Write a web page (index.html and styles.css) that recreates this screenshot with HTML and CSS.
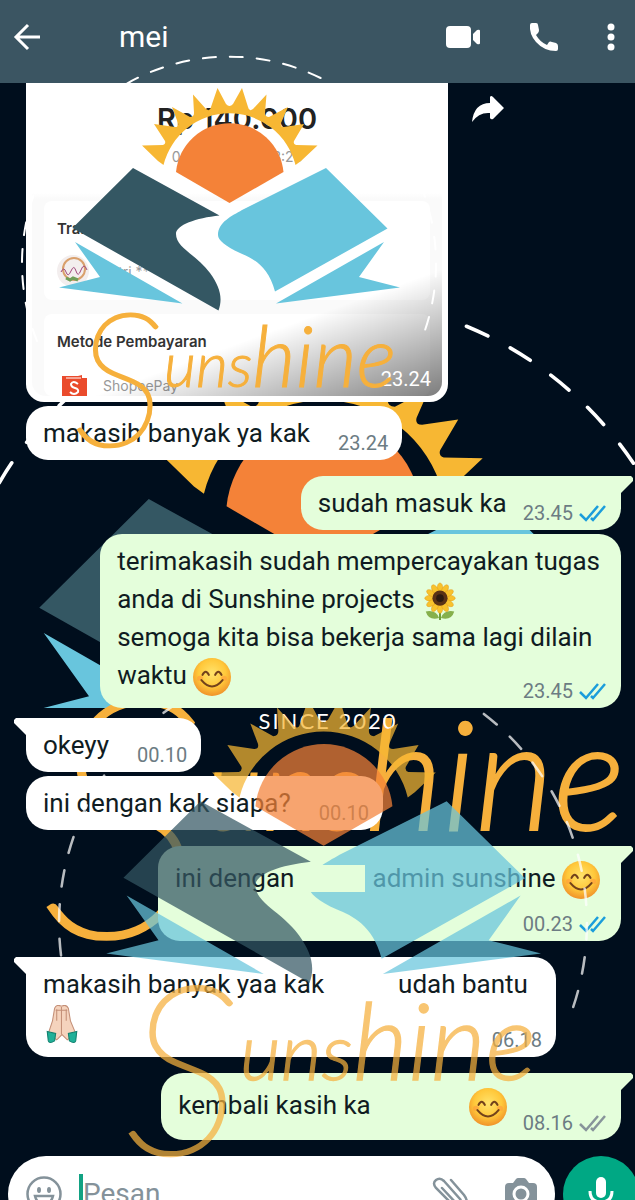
FILE: index.html
```
<!DOCTYPE html>
<html lang="id">
<head>
  <meta charset="UTF-8">
  <title>mei</title>
  <meta name="viewport" content="width=device-width,initial-scale=1">
  <link rel="stylesheet" href="styles.css">
</head>
<body>
  <svg class="defs" aria-hidden="true">
    <defs>
      <radialGradient id="face" cx="50%" cy="40%" r="60%">
        <stop offset="0" stop-color="#ffe36b"/><stop offset=".6" stop-color="#ffc83a"/><stop offset="1" stop-color="#f0922a"/>
      </radialGradient>
      <clipPath id="upper"><rect width="635" height="708"/></clipPath>
      <clipPath id="lower"><rect y="708" width="635" height="492"/></clipPath>
      <g id="mark">
        <path class="ring" d="M37 341A207 207 0 1 1 421 341"/>
        <path fill="#f7b733" d="M142 145.500L163 145Q166 144 165 141L154 124L175 127Q179 127 178 123L172 107L190 117Q194 117 194 113L193 94.500L206 109Q210 112 211 107L217.500 88L226 104Q229.500 108 233 104L242 88L248 107Q249 112 253 109L266.500 94.500L265 113Q265 117 269 117L288 107L281 123Q280 127 284 127L304 124L294 141Q293 144 296 145L317.500 145.500L301 161L295.500 165A68 68 0 0 0 163.500 165L158 161Z"/>
        <path fill="#f48238" d="M176 172A54 54 0 0 1 283.500 172L229.500 203Z"/>
        <path fill="#345763" d="M133 168L219.500 215.500C196 218 176 225 176 234C176 248 197 255 210 273C220 287 223 298 218.500 310.500L72.500 228Z"/>
        <path fill="#68c5dd" d="M326 168L387.500 228.500L275 291.500C268 265 252 258 240 253C225 246 218 240 218 235C218 222 232 216 242 210ZM75 242L182.500 303.500L59 287.500L100 277ZM384 242L359 277L400 287.500L276 303.500Z"/>
      </g>
      <g id="script">
        <text class="script-cap" x="74" y="445">S</text>
        <text class="script" x="164" y="387">uns<tspan class="script-tail">hine</tspan></text>
      </g>
      <symbol id="smile" viewBox="0 0 36 36">
        <circle cx="18" cy="18" r="18" fill="url(#face)"/>
        <path d="M4 18q3-3 6 1q-3 4-6 2zM32 18q-3-3-6 1q3 4 6 2z" fill="#ff9a3c" opacity=".6"/>
        <path d="M9 16q3-6 6 0M21 16q3-6 6 0M8 21q10 12 20 0" fill="none" stroke="#73421b" stroke-width="2" stroke-linecap="round"/>
      </symbol>
      <symbol id="sunflower" viewBox="0 0 36 40">
        <path d="M18 24v16" stroke="#6b9a35" stroke-width="2"/>
        <path d="M17 38Q14 29 3 31Q6 41 17 38ZM19 38Q22 29 33 31Q30 41 19 38Z" fill="#86b04c"/>
        <g fill="#f8c22c" stroke="#e39a18" stroke-width=".5">
          <g id="petals"><ellipse cx="18" cy="7" rx="3" ry="6"/><ellipse cx="18" cy="27" rx="3" ry="6"/><ellipse cx="8" cy="17" rx="6" ry="3"/><ellipse cx="28" cy="17" rx="6" ry="3"/></g>
          <use href="#petals" transform="rotate(30 18 17)"/>
          <use href="#petals" transform="rotate(60 18 17)"/>
        </g>
        <circle cx="18" cy="17" r="8" fill="#5a3216"/><circle cx="18" cy="17" r="4" fill="#2c1a10"/>
      </symbol>
      <symbol id="pray" viewBox="0 0 36 36">
        <path d="M17 1Q13-1 11 3L9 15L5 27L13 33L18 28L23 33L31 27L26 15L24 3Q22-1 18 1Z" fill="#f5d3bd" stroke="#c49078" stroke-width="1"/>
        <path d="M17.500 2V28M13 4V15M22 4V15M12 5h5M18 5h5" fill="none" stroke="#c49078" stroke-width="1"/>
        <path d="M4 25L12 27L11 34Q6 37 5 34ZM32 25L24 27L25 34Q30 37 31 34Z" fill="#20b098" stroke="#12806e" stroke-width="1"/>
      </symbol>
      <symbol id="ticks" viewBox="0 0 28 18">
        <path d="M1 10L7 16L19 2M12 14L14 16L26 2" fill="none" stroke="currentColor" stroke-width="2.500"/>
      </symbol>
    </defs>
  </svg>

  <div class="app">
    <svg class="wallpaper" viewBox="0 0 635 1200" preserveAspectRatio="xMidYMin slice" aria-hidden="true">
      <g clip-path="url(#upper)"><use href="#mark" transform="translate(-92 195) scale(1.81)"/></g>
      <use href="#script" transform="translate(-92 130) scale(1.81)"/>
      <text class="since" x="328" y="729">SINCE 2020</text>
    </svg>

    <header class="topbar">
      <button class="icon-btn" aria-label="Kembali">
        <svg width="28" height="28" viewBox="0 0 28 28"><path d="M15 2L3 14L15 26M3 14H27" fill="none" stroke="#fff" stroke-width="3"/></svg>
      </button>
      <h1>mei</h1>
      <button class="icon-btn" aria-label="Panggilan video">
        <svg width="36" height="24" viewBox="0 0 36 24" fill="#fff"><rect x="1" y="1" width="25" height="22" rx="4"/><path d="M28 9L32 5Q35 4 35 6V18Q35 20 32 19L28 15Z"/></svg>
      </button>
      <button class="icon-btn" aria-label="Panggilan suara">
        <svg width="30" height="30" viewBox="0 0 30 30" fill="#fff"><path d="M1 3Q1 1 3 1H7Q9 1 9 3L10 8Q10 10 9 11L7 13Q11 20 18 23L20 20Q21 19 23 20L27 21Q29 22 29 24V27Q29 29 27 29Q15 29 7 20Q0 12 1 3Z"/></svg>
      </button>
      <button class="icon-btn" aria-label="Menu">
        <svg width="8" height="28" viewBox="0 0 8 28" fill="#fff"><circle cx="4" cy="4" r="3.500"/><circle cx="4" cy="14" r="3.500"/><circle cx="4" cy="24" r="3.500"/></svg>
      </button>
    </header>

    <main class="chat">
      <div class="row">
        <div class="photo">
          <div class="receipt">
            <p class="amount">Rp 140.000</p>
            <p class="date">08 Jun 2023, 23:23</p>
            <section class="card card--to">
              <h2>Transfer ke</h2>
              <div class="line">
                <svg width="32" height="32" viewBox="0 0 32 32"><circle cx="16" cy="16" r="16" fill="#f3eeee"/><circle cx="17" cy="14" r="11" fill="none" stroke="#d9a06c" stroke-width="2"/><path d="M4 17q3-6 5 0t5-1t5 0t5-1t6 0" fill="none" stroke="#a0487c" stroke-width="1"/><path d="M9 23l4 2l3-2l5 2" fill="none" stroke="#6f9f58" stroke-width="3"/></svg>
                <span>Putri ****</span>
              </div>
            </section>
            <section class="card card--pay">
              <h2>Metode Pembayaran</h2>
              <div class="line">
                <svg width="34" height="22" viewBox="0 0 34 22"><path d="M5 2H21L25 1V4H30V22H5Z" fill="#ea4b2c"/><path d="M9 4H24" stroke="#fff"/><path d="M21 10q-5-4-7 0q0 3 4 4t3 4q-4 4-8 0" fill="none" stroke="#fff" stroke-width="2"/></svg>
                <span>ShopeePay</span>
              </div>
            </section>
            <time>23.24</time>
          </div>
        </div>
        <button class="icon-btn" aria-label="Teruskan">
          <svg width="34" height="28" viewBox="0 0 34 28"><path d="M1 27Q3 8 19 8V2Q20 0 22 2L33 13L22 24Q20 25 19 23V18Q8 17 1 27Z" fill="#fff"/></svg>
        </button>
      </div>

      <div class="bubble bubble--next"><p>makasih banyak ya kak</p><time>23.24</time></div>

      <div class="bubble bubble--out tail"><p>sudah masuk ka</p><time>23.45 <svg class="ticks read"><use href="#ticks"/></svg></time></div>
      <div class="bubble bubble--out bubble--next bubble--block">
        <p>terimakasih sudah mempercayakan tugas<br>anda di Sunshine projects <svg class="emoji"><use href="#sunflower"/></svg><br>semoga kita bisa bekerja sama lagi dilain<br>waktu <svg class="emoji"><use href="#smile"/></svg></p>
        <time>23.45 <svg class="ticks read"><use href="#ticks"/></svg></time>
      </div>

      <div class="bubble tail bubble--close"><p>okeyy</p><time>00.10</time></div>
      <div class="bubble bubble--next"><p>ini dengan kak siapa?</p><time>00.10</time></div>

      <div class="bubble bubble--out tail bubble--block bubble--tall bubble--below">
        <p>ini dengan<span class="patch"></span>admin sunshine <svg class="emoji"><use href="#smile"/></svg></p>
        <time>00.23 <svg class="ticks read"><use href="#ticks"/></svg></time>
      </div>

      <div class="bubble tail bubble--block bubble--thanks">
        <p>makasih banyak yaa kak<span class="blank"></span>udah bantu<br><svg class="emoji"><use href="#pray"/></svg></p>
        <time>06.18</time>
      </div>

      <div class="bubble bubble--out tail bubble--tall">
        <p>kembali kasih ka<span class="blank blank--wide"></span><svg class="emoji"><use href="#smile"/></svg></p>
        <time>08.16 <svg class="ticks"><use href="#ticks"/></svg></time>
      </div>
    </main>

    <form class="composer">
      <div class="field">
        <button type="button" class="icon-btn" aria-label="Emoji">
          <svg width="36" height="36" viewBox="0 0 36 36" fill="none" stroke="#84929a" stroke-width="2.500"><circle cx="18" cy="18" r="16.500"/><ellipse cx="13" cy="14" rx="2" ry="3" fill="#84929a" stroke="none"/><ellipse cx="23" cy="14" rx="2" ry="3" fill="#84929a" stroke="none"/><path d="M9 20H27Q25 28 18 28T9 20Z"/></svg>
        </button>
        <input type="text" placeholder="Pesan" aria-label="Pesan">
        <button type="button" class="icon-btn" aria-label="Lampirkan">
          <svg width="36" height="36" viewBox="0 0 36 36" fill="none" stroke="#84929a" stroke-width="2.500" stroke-linecap="round"><path d="M19 4L32 19Q38 27 31 31Q26 34 21 29L4 12Q0 7 4 4Q8 1 12 5L28 23Q30 26 28 28Q26 29 24 27L10 12"/></svg>
        </button>
        <button type="button" class="icon-btn" aria-label="Kamera">
          <svg width="34" height="32" viewBox="0 0 34 32"><path d="M5 5H9L12 1Q13 0 14 0H20Q21 0 22 1L25 5H29Q33 5 33 9V28Q33 32 29 32H5Q1 32 1 28V9Q1 5 5 5Z" fill="#84929a"/><circle cx="17" cy="16" r="7" fill="none" stroke="#fff" stroke-width="3"/></svg>
        </button>
      </div>
      <button type="button" class="mic" aria-label="Rekam suara">
        <svg width="28" height="34" viewBox="0 0 28 34"><rect x="9" y="0" width="10" height="21" rx="5" fill="#fff"/><path d="M3 14Q3 25 14 25T25 14M14 25V33" fill="none" stroke="#fff" stroke-width="3"/></svg>
      </button>
    </form>

    <svg class="watermark" viewBox="0 0 635 1200" preserveAspectRatio="xMidYMin slice" aria-hidden="true">
      <use href="#mark"/>
      <use href="#script"/>
      <g clip-path="url(#lower)">
        <g transform="translate(31 587) scale(1.275)" opacity=".72">
          <use href="#mark"/>
          <use href="#script"/>
        </g>
      </g>
    </svg>
  </div>
</body>
</html>
```
FILE: styles.css
```
*{box-sizing:border-box}
body{margin:0;background:#000e1d;color:#101c22;font-family:Roboto,"Noto Sans",sans-serif}
h1,h2,p{margin:0;font-weight:400}
button{margin:0;padding:0;border:none;background:none;cursor:pointer}
svg{display:block;flex:none}
.defs{position:absolute;width:0;height:0}
.app{position:relative;isolation:isolate;height:100vh;overflow:hidden}

/* logo layers */
.wallpaper,.watermark{position:absolute;top:0;left:0;width:100%;height:100%;pointer-events:none}
.wallpaper{z-index:-1}
.watermark{z-index:2}
.ring{fill:none;stroke:#fff;stroke-width:2;stroke-linecap:round;stroke-dasharray:13 14}
.script,.script-cap{font-family:Lato,sans-serif;font-style:italic;fill:#f6b03c;stroke:#f6b03c}
.script{font-size:62px;font-weight:300;stroke-width:1}
.script-tail{font-size:84px}
.script-cap{font-size:184px;font-weight:100;stroke-width:3}
.since{font-family:Lato,sans-serif;font-size:22px;letter-spacing:2px;text-anchor:middle;fill:#fff}

.topbar{display:flex;align-items:center;height:83px;padding:0 20px 10px 13px;background:#3b5562;color:#fff}
.topbar h1{flex:1;margin-left:78px;font-size:30px;line-height:36px}
.topbar .icon-btn + .icon-btn{margin-left:48px}

.chat{display:flex;flex-direction:column;align-items:flex-start;padding:0 14px 0 26px}
.row{display:flex;gap:23px}
.row .icon-btn{align-self:flex-start;margin-top:12px}

/* photo message */
.photo{width:422px;padding:0 6px 6px;border-radius:0 0 18px 18px;background:#fff}
.receipt{position:relative;display:flex;flex-direction:column;height:313px;padding:18px 12px 0;border-radius:0 0 14px 14px;overflow:hidden;background:linear-gradient(#fff 110px,#fafafa 116px);font-family:Inter,sans-serif;text-align:center}
.receipt::after{content:"";position:absolute;inset:180px 0 0;background:linear-gradient(160deg,transparent 55%,rgba(0,0,0,.5))}
.amount{font-size:29px;font-weight:600;line-height:36px;color:#222}
.date{margin-top:10px;font-size:14px;line-height:20px;color:#999}
.card{padding:18px 13px 0;border-radius:8px;background:#fff;text-align:left}
.card--to{height:103px;margin-top:34px}
.card--pay{flex:1;margin-top:14px}
.card h2{font-size:15px;font-weight:600;line-height:20px;color:#333}
.line{display:flex;align-items:center;gap:12px;margin-top:16px;font-size:14px;color:#999}
.card--pay .line{margin-top:22px}
.receipt time{position:absolute;right:11px;bottom:5px;z-index:1;color:#fff;font-family:Roboto,sans-serif}

/* text messages */
.bubble{position:relative;display:grid;grid-template-columns:auto auto;column-gap:28px;margin-top:16px;padding:8px 14px 5px 17px;border-radius:22px;background:#fff}
.bubble p{padding-bottom:3px;font-size:26px;line-height:38px;white-space:nowrap}
.bubble--out{align-self:flex-end;column-gap:16px;background:#e4fedb}
.bubble--next{margin-top:4px}
.bubble--close{margin-top:10px}
.bubble--block{grid-template-columns:auto}
.bubble--block p,.bubble--block time{grid-area:1/1}
.bubble--block p{padding-right:7px;padding-bottom:9px}
.bubble--tall p{padding-bottom:6px;line-height:48px}
.bubble--below p{padding-bottom:34px}
.bubble--thanks p{padding-right:14px;padding-bottom:11px}
.tail{border-top-left-radius:0}
.tail::before{content:"";position:absolute;top:0;left:-12px;width:13px;height:18px;background:inherit;clip-path:polygon(15% 0,100% 0,100% 100%,0 5px,0 2px)}
.bubble--out.tail{border-radius:22px 0 22px 22px}
.bubble--out.tail::before{left:auto;right:-12px;clip-path:polygon(0 0,85% 0,100% 2px,100% 5px,0 100%)}

time{display:flex;align-items:center;justify-self:end;align-self:end;gap:6px;font-size:20px;line-height:24px;color:#6c7c83}
.ticks{width:28px;height:18px;color:#87949a}
.read{color:#1b9ddb}
.emoji{display:inline-block;width:38px;height:38px;margin:-2px 0;vertical-align:-10px}
.patch,.blank{display:inline-block;width:74px;height:27px;vertical-align:-5px}
.patch{position:relative;z-index:3;width:71px;margin-right:7px;background:#e4fedb}
.blank--wide{width:98px}

.composer{display:flex;gap:8px;margin-top:16px;padding:0 0 0 8px}
.field{display:flex;flex:1;align-items:center;min-width:0;height:76px;padding:0 17px 0 18px;border-radius:38px;background:#fff}
.field input{flex:1;min-width:0;height:40px;margin:0 0 0 17px;padding:0;border:none;border-left:4px solid #12a283;outline:none;font:28px/40px Roboto,sans-serif}
.field input::placeholder{color:#84929a;opacity:1}
.field .icon-btn + .icon-btn{margin-left:36px}
.mic{display:flex;flex:none;align-items:center;justify-content:center;width:76px;height:76px;margin-right:-4px;border-radius:50%;background:#00a884}
```
